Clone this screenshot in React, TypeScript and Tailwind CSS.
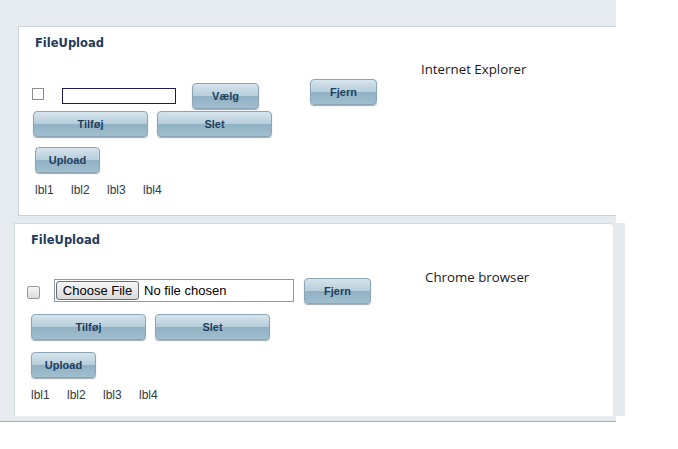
const btn =
  "flex items-center justify-center h-[26px] rounded-[4px] border border-[#8ba5b5] bg-[linear-gradient(to_bottom,#d6e4ec_0%,#b6cdda_50%,#90b0c4_50%,#a0bece_100%)] shadow-[0_1px_1px_rgba(40,60,80,0.45)] text-[11px] font-bold text-[#1d3f5e] [font-family:'Liberation_Sans',Arial,sans-serif]"

function Btn({ label, w }: { label: string; w: string }) {
  return <div className={`${btn} ${w}`}>{label}</div>
}

function Title() {
  return (
    <div className="h-[14px] leading-[14px] text-[11.5px] font-bold text-[#1e3a5a] [font-family:'DejaVu_Sans',Verdana,sans-serif]">
      FileUpload
    </div>
  )
}

function Labels() {
  return (
    <div className="flex h-[14px] leading-[14px] text-[12px] text-[#2e3a44] [font-family:'Liberation_Sans',Arial,sans-serif]">
      {["lbl1", "lbl2", "lbl3", "lbl4"].map((l) => (
        <span key={l} className="w-[36px]">
          {l}
        </span>
      ))}
    </div>
  )
}

function IEPanel() {
  return (
    <div className="ml-[18px] h-[190px] bg-white border border-r-0 border-[#cbd3d7] pl-[13px] pt-[9px] flex flex-col">
      <div className="pl-[3px]">
        <Title />
      </div>
      <div className="flex items-start h-[47px] mt-[12px]">
        <span className="mt-[26px] w-[12px] h-[12px] border border-[#8c8c8c] bg-white" />
        <span className="mt-[26px] ml-[18px] w-[114px] h-[16px] border border-[#1c1c5c] bg-white" />
        <div className="mt-[21px] ml-[16px]">
          <Btn label="Vælg" w="w-[67px]" />
        </div>
        <div className="mt-[17px] ml-[51px]">
          <Btn label="Fjern" w="w-[67px]" />
        </div>
        <span className="ml-[44px] leading-[15px] text-[13.3px] text-[#1a1a1a] [font-family:'Open_Sans',sans-serif]">
          Internet Explorer
        </span>
      </div>
      <div className="flex mt-[2px] ml-[1px] gap-[9px]">
        <Btn label="Tilføj" w="w-[115px]" />
        <Btn label="Slet" w="w-[115px]" />
      </div>
      <div className="flex mt-[10px] ml-[3px]">
        <Btn label="Upload" w="w-[65px]" />
      </div>
      <div className="mt-[10px] ml-[3px]">
        <Labels />
      </div>
    </div>
  )
}

function ChromePanel() {
  return (
    <div className="w-[599px] h-[193px] bg-white border-l border-t border-[#d3dade] rounded-tr-[4px] pl-[12px] pt-[9px] flex flex-col">
      <div className="pl-[4px]">
        <Title />
      </div>
      <div className="flex items-start h-[34px] mt-[23px]">
        <span className="mt-[16px] w-[13px] h-[13px] rounded-[2px] border border-[#9a9a9a] bg-[linear-gradient(to_bottom,#f4f4f4,#dcdcdc)]" />
        <div className="mt-[9px] ml-[14px] w-[240px] h-[23px] border border-[#8a9aa8] bg-white flex items-center pl-[1px] [font-family:'Liberation_Sans',Arial,sans-serif] text-[13px] text-black">
          <span className="h-[19px] w-[83px] flex items-center justify-center rounded-[3px] border border-[#6f6f6f] bg-[linear-gradient(to_bottom,#f6f6f6,#dadada)]">
            Choose File
          </span>
          <span className="ml-[5px]">No file chosen</span>
        </div>
        <div className="mt-[8px] ml-[10px]">
          <Btn label="Fjern" w="w-[67px]" />
        </div>
        <span className="ml-[54px] leading-[15px] text-[13.3px] text-[#1a1a1a] [font-family:'Open_Sans',sans-serif]">
          Chrome browser
        </span>
      </div>
      <div className="flex mt-[10px] ml-[4px] gap-[9px]">
        <Btn label="Tilføj" w="w-[115px]" />
        <Btn label="Slet" w="w-[115px]" />
      </div>
      <div className="flex mt-[12px] ml-[4px]">
        <Btn label="Upload" w="w-[65px]" />
      </div>
      <div className="mt-[10px] ml-[4px]">
        <Labels />
      </div>
    </div>
  )
}

export default function App() {
  return (
    <div className="w-[678px] h-[449px] bg-white overflow-hidden">
      <div className="w-[616px] bg-[#e5ebee] pt-[26px]">
        <IEPanel />
        <div className="h-[7px]" />
        <div className="flex w-[625px]">
          <div className="w-[14px]" />
          <ChromePanel />
          <div className="w-[12px] bg-[#e3e9ec]" />
        </div>
        <div className="h-[5px]" />
      </div>
      <div className="w-[616px] h-px bg-[#a8a8a8]" />
    </div>
  )
}
